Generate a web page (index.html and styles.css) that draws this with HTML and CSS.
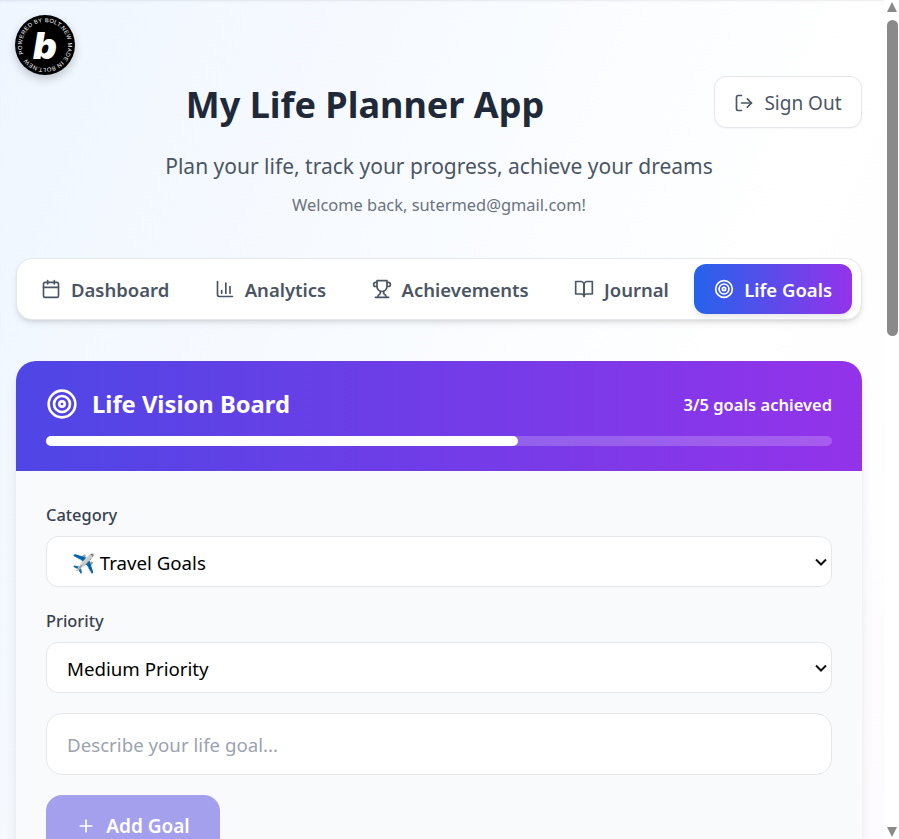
FILE: index.html
```html
<!DOCTYPE html>
<html lang="en">
<head>
    <meta charset="UTF-8">
    <meta name="viewport" content="width=device-width, initial-scale=1.0">
    <title>My Life Planner App</title>
    <link rel="stylesheet" href="styles.css">
</head>
<body>
    <main class="viewport">
        <div class="page">
            <a class="bolt-badge" href="#">
                <svg viewBox="0 0 60 60" width="60" height="60">
                    <defs>
                        <path id="badgeRing" d="M7 30a23 23 0 1 1 46 0a23 23 0 1 1-46 0"/>
                    </defs>
                    <circle cx="30" cy="30" r="30" fill="#000"/>
                    <g transform="rotate(-22 30 30)">
                        <text class="badge-ring-text"><textPath href="#badgeRing">POWERED BY BOLT.NEW MADE IN BOLT.NEW</textPath></text>
                    </g>
                    <text class="badge-b" x="30" y="44" text-anchor="middle">b</text>
                </svg>
            </a>

            <header class="header">
                <div class="title-row">
                    <h1>My Life Planner App</h1>
                    <button class="sign-out" type="button">
                        <svg class="icon" viewBox="0 0 24 24"><path d="M9 21H5a2 2 0 0 1-2-2V5a2 2 0 0 1 2-2h4"/><polyline points="16 17 21 12 16 7"/><line x1="21" y1="12" x2="9" y2="12"/></svg>
                        Sign Out
                    </button>
                </div>
                <p class="subtitle">Plan your life, track your progress, achieve your dreams</p>
                <p class="welcome">Welcome back, sutermed@gmail.com!</p>
            </header>

            <nav class="tabs">
                <a class="tab" href="#">
                    <svg class="icon" viewBox="0 0 24 24"><path d="M8 2v4"/><path d="M16 2v4"/><rect x="3" y="4" width="18" height="18" rx="2"/><path d="M3 10h18"/></svg>
                    Dashboard
                </a>
                <a class="tab" href="#">
                    <svg class="icon" viewBox="0 0 24 24"><path d="M3 3v16a2 2 0 0 0 2 2h16"/><path d="M18 17V9"/><path d="M13 17V5"/><path d="M8 17v-3"/></svg>
                    Analytics
                </a>
                <a class="tab" href="#">
                    <svg class="icon" viewBox="0 0 24 24"><path d="M6 9H4.5a2.5 2.5 0 0 1 0-5H6"/><path d="M18 9h1.5a2.5 2.5 0 0 0 0-5H18"/><path d="M4 22h16"/><path d="M10 14.66V17c0 .55-.47.98-.97 1.21C7.85 18.75 7 20.24 7 22"/><path d="M14 14.66V17c0 .55.47.98.97 1.21C16.15 18.75 17 20.24 17 22"/><path d="M18 2H6v7a6 6 0 0 0 12 0V2Z"/></svg>
                    Achievements
                </a>
                <a class="tab" href="#">
                    <svg class="icon" viewBox="0 0 24 24"><path d="M2 3h6a4 4 0 0 1 4 4v14a3 3 0 0 0-3-3H2z"/><path d="M22 3h-6a4 4 0 0 0-4 4v14a3 3 0 0 1 3-3h7z"/></svg>
                    Journal
                </a>
                <a class="tab active" href="#">
                    <svg class="icon" viewBox="0 0 24 24"><circle cx="12" cy="12" r="10"/><circle cx="12" cy="12" r="6"/><circle cx="12" cy="12" r="2"/></svg>
                    Life Goals
                </a>
            </nav>

            <section class="card">
                <div class="card-head">
                    <div class="card-head-row">
                        <h2>
                            <svg class="icon icon-lg" viewBox="0 0 24 24"><circle cx="12" cy="12" r="10"/><circle cx="12" cy="12" r="6"/><circle cx="12" cy="12" r="2"/></svg>
                            Life Vision Board
                        </h2>
                        <span class="goal-count">3/5 goals achieved</span>
                    </div>
                    <div class="progress"><div class="progress-fill" style="width: 60%"></div></div>
                </div>
                <form class="card-body">
                    <label class="field-label" for="category">Category</label>
                    <select class="field-select" id="category">
                        <option>&nbsp;✈️ Travel Goals</option>
                    </select>
                    <label class="field-label" for="priority">Priority</label>
                    <select class="field-select" id="priority">
                        <option>Medium Priority</option>
                    </select>
                    <input class="field-input" type="text" placeholder="Describe your life goal...">
                    <button class="add-goal" type="button">
                        <svg class="icon" viewBox="0 0 24 24"><path d="M5 12h14"/><path d="M12 5v14"/></svg>
                        Add Goal
                    </button>
                </form>
            </section>
        </div>
    </main>

    <div class="scrollbar">
        <span class="arrow arrow-up"></span>
        <div class="scroll-track"><div class="scroll-thumb"></div></div>
        <span class="arrow arrow-down"></span>
    </div>
</body>
</html>
```

FILE: styles.css
```css
* {
    box-sizing: border-box;
}
html, body {
    height: 100%;
    margin: 0;
    overflow: hidden;
}
body {
    display: flex;
    font-family: "Noto Sans", "Open Sans", sans-serif;
    color: #1f2937;
    background: #fff;
}
.viewport {
    flex: 1;
    height: 100%;
    overflow: hidden;
}
.page {
    position: relative;
    height: 2100px;
    padding: 76px 22px 0 16px;
    background: linear-gradient(to bottom right, #eff6ff, #fff, #faf5ff);
    box-shadow: inset 0 2px 2px -1px rgba(0, 0, 0, 0.08);
}
.icon {
    width: 20px;
    height: 20px;
    flex: none;
    fill: none;
    stroke: currentColor;
    stroke-width: 2;
    stroke-linecap: round;
    stroke-linejoin: round;
}
.icon-lg {
    width: 32px;
    height: 32px;
}

/* badge */
.bolt-badge {
    position: absolute;
    top: 15px;
    left: 15px;
    width: 60px;
    height: 60px;
    border-radius: 50%;
    box-shadow: 0 4px 10px rgba(0, 0, 0, 0.2);
}
.bolt-badge svg {
    display: block;
}
.badge-ring-text {
    font-family: "Liberation Sans", sans-serif;
    font-size: 5.8px;
    letter-spacing: 0.32px;
    fill: #fff;
}
.badge-b {
    font-family: "Inter", sans-serif;
    font-size: 37px;
    font-weight: 900;
    font-style: italic;
    fill: #fff;
}

/* header */
.title-row {
    display: flex;
    align-items: flex-start;
    height: 52px;
}
h1 {
    flex: 1;
    margin: 0;
    font-size: 36px;
    line-height: 58px;
    font-weight: 700;
    text-align: center;
    color: #1f2937;
}
.sign-out {
    width: 148px;
    height: 52px;
    display: flex;
    align-items: center;
    justify-content: center;
    gap: 10px;
    padding: 2px 0 0;
    border: 1px solid #e5e7eb;
    border-radius: 12px;
    background: #fff;
    color: #4b5563;
    font: inherit;
    font-size: 19px;
    box-shadow: 0 1px 2px rgba(0, 0, 0, 0.04);
}
.subtitle {
    margin: 23px 0 0;
    font-size: 21px;
    line-height: 30px;
    text-align: center;
    color: #4b5563;
}
.welcome {
    margin: 12px 0 0;
    font-size: 16.4px;
    line-height: 24px;
    text-align: center;
    color: #6b7280;
}

/* tabs */
.tabs {
    display: flex;
    gap: 5.3px;
    margin-top: 41px;
    height: 62px;
    padding: 5px 4px;
    background: #fff;
    border: 1px solid #e5e7eb;
    border-radius: 16px;
    box-shadow: 0 4px 6px -1px rgba(0, 0, 0, 0.1), 0 2px 4px -2px rgba(0, 0, 0, 0.1);
}
.tab {
    display: flex;
    align-items: center;
    gap: 10px;
    height: 50px;
    padding: 0 20px;
    border-radius: 12px;
    color: #4b5563;
    font-size: 18.5px;
    font-weight: 600;
    white-space: nowrap;
    text-decoration: none;
}
.tab.active {
    color: #fff;
    background: linear-gradient(to right, #2563eb, #9333ea);
    box-shadow: 0 4px 6px -1px rgba(0, 0, 0, 0.1);
}

/* card */
.card {
    margin-top: 41px;
    border-radius: 20px;
    overflow: hidden;
    background: #f9fafb;
    box-shadow: 0 10px 15px -3px rgba(0, 0, 0, 0.1), 0 4px 6px -4px rgba(0, 0, 0, 0.1);
}
.card-head {
    height: 110px;
    padding: 27px 30px 0;
    color: #fff;
    background: linear-gradient(to right, #4f46e5, #9333ea);
}
.card-head-row {
    display: flex;
    align-items: center;
    justify-content: space-between;
    height: 32px;
}
h2 {
    display: flex;
    align-items: center;
    gap: 14px;
    margin: 0;
    font-size: 23.75px;
    font-weight: 700;
}
.goal-count {
    font-size: 16.5px;
    font-weight: 600;
}
.progress {
    height: 10px;
    margin-top: 16px;
    border-radius: 5px;
    background: rgba(255, 255, 255, 0.2);
}
.progress-fill {
    height: 100%;
    border-radius: 5px;
    background: #fff;
}
.card-body {
    padding: 30px;
    display: flex;
    flex-direction: column;
    align-items: flex-start;
}
.field-label {
    font-size: 16.4px;
    line-height: 24px;
    font-weight: 500;
    color: #374151;
    margin: 2px 0 9px;
}
.field-select {
    width: 100%;
    height: 51px;
    padding: 2px 20px 0;
    margin-bottom: 20px;
    border: 1px solid #e5e7eb;
    border-radius: 12px;
    appearance: none;
    background: #fff url("data:image/svg+xml,%3Csvg xmlns='http://www.w3.org/2000/svg' width='12' height='8' viewBox='0 0 12 8'%3E%3Cpath d='M1 1.5l5 5 5-5' fill='none' stroke='%23111' stroke-width='2'/%3E%3C/svg%3E") no-repeat right 4px center;
    color: #000;
    font: inherit;
    font-size: 18.7px;
}
.field-input {
    width: 100%;
    height: 62px;
    padding: 0 20px;
    border: 1px solid #e5e7eb;
    border-radius: 16px;
    background: #fff;
    font: inherit;
    font-size: 18.7px;
}
.field-input::placeholder {
    color: #9ca3af;
}
.add-goal {
    display: flex;
    align-items: center;
    gap: 10px;
    width: 174px;
    height: 60px;
    margin-top: 20px;
    padding: 2px 0 0;
    justify-content: center;
    border: 0;
    border-radius: 16px;
    color: #fff;
    background: #a5a0ee;
    font: inherit;
    font-size: 19px;
    font-weight: 600;
}

/* scrollbar */
.scrollbar {
    width: 15px;
    height: 100%;
    flex: none;
    display: flex;
    flex-direction: column;
    background: #fff;
}
.arrow {
    display: block;
    width: 15px;
    height: 17px;
    flex: none;
    position: relative;
}
.arrow::after {
    content: "";
    position: absolute;
    left: 3px;
    border-left: 5.5px solid transparent;
    border-right: 5.5px solid transparent;
}
.arrow-up::after {
    top: 2px;
    border-bottom: 10px solid #8a8a8a;
}
.arrow-down::after {
    bottom: 2px;
    border-top: 10px solid #8a8a8a;
}
.scroll-track {
    flex: 1;
    padding: 3px 1px 0 3px;
}
.scroll-thumb {
    height: 316px;
    border-radius: 6px;
    background: #8a8a8a;
}
```
